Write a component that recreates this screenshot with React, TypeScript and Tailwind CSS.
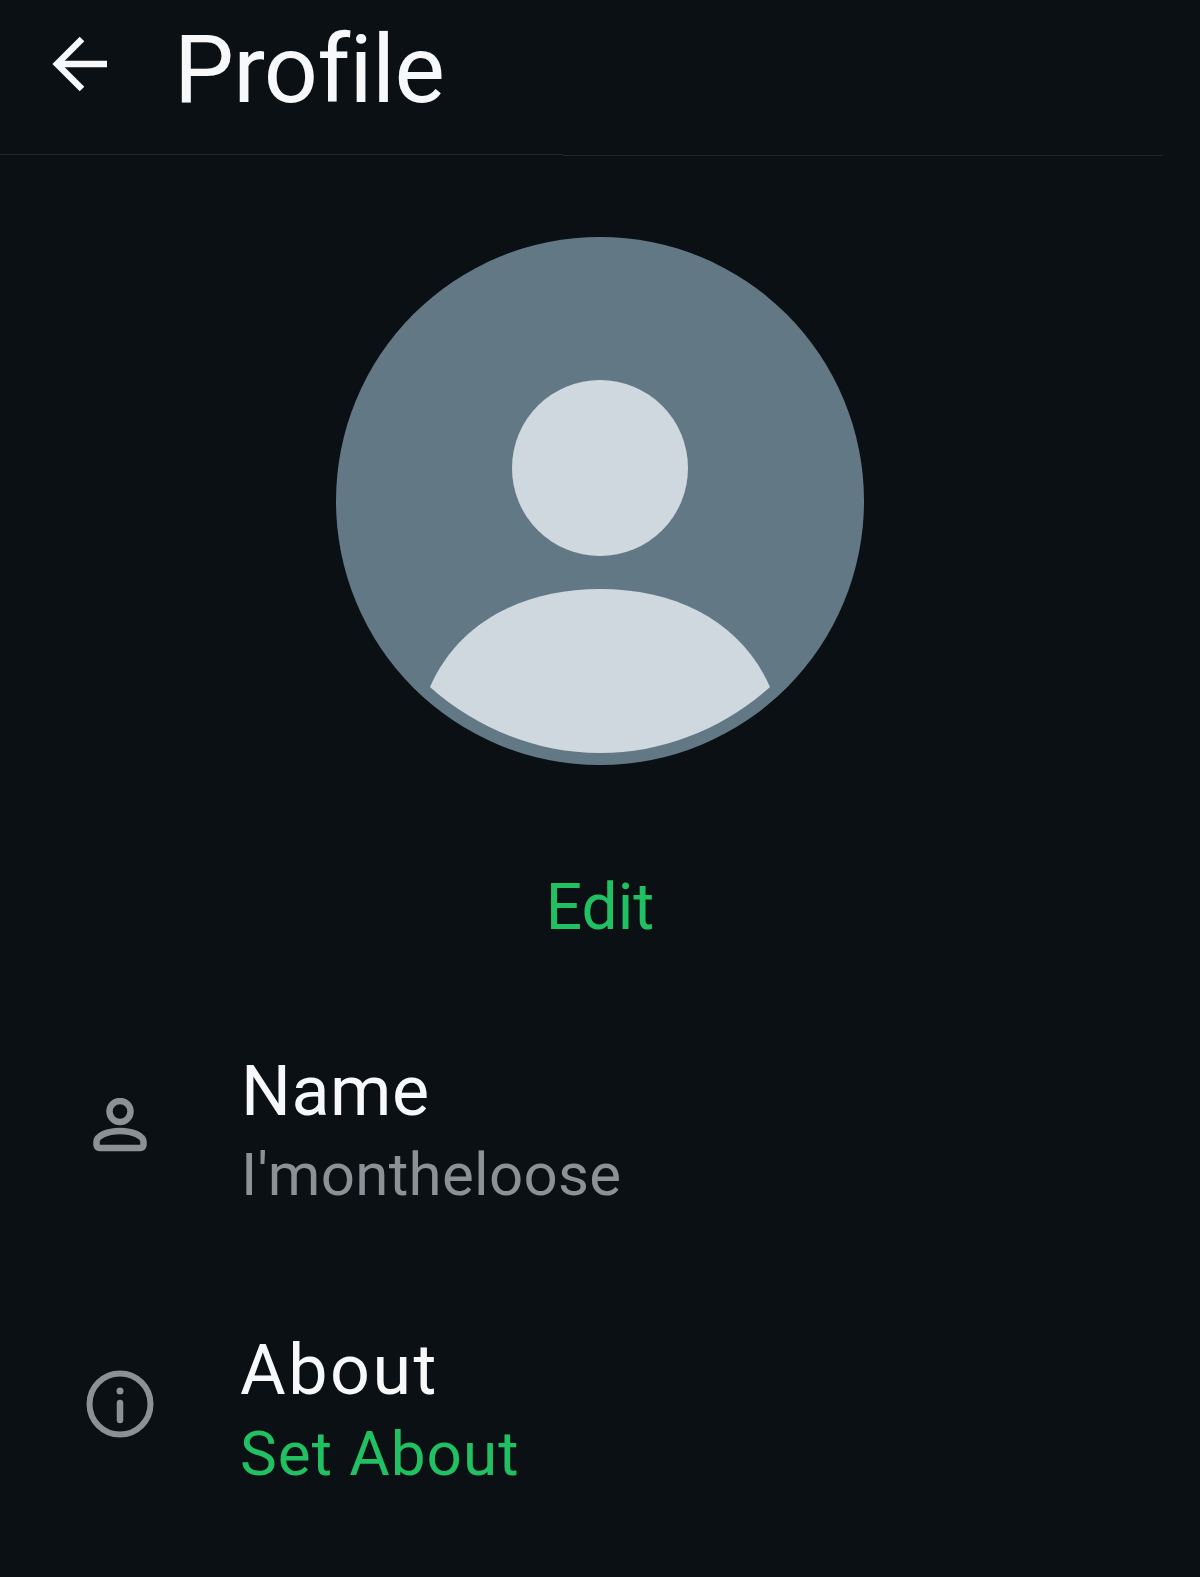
function BackArrow() {
  return (
    <svg width="56" height="56" viewBox="0 0 56 56" fill="none" stroke="#f7f8fa" strokeWidth="6.500" strokeLinecap="butt" strokeLinejoin="miter">
      <path d="M55 28H5" />
      <path d="M30 3 5 28l25 25" />
    </svg>
  );
}

function PersonIcon() {
  return (
    <svg width="54" height="54" viewBox="0 0 54 54" fill="none" stroke="#8b9195" strokeWidth="6.500">
      <circle cx="27" cy="13.500" r="10.500" />
      <path d="M3.500 47v-3c0-6 10-11 23.500-11s23.500 5 23.500 11v3a3 3 0 0 1-3 3H6.500a3 3 0 0 1-3-3Z" />
    </svg>
  );
}

function InfoIcon() {
  return (
    <svg width="68" height="68" viewBox="0 0 68 68" fill="none" stroke="#8b9195" strokeWidth="6">
      <circle cx="34" cy="34" r="30.500" />
      <circle cx="34" cy="21" r="3.500" fill="#8b9195" stroke="none" />
      <path d="M34 33v17" strokeWidth="6.500" strokeLinecap="round" />
    </svg>
  );
}

function Avatar() {
  return (
    <svg width="528" height="528" viewBox="0 0 528 528">
      <circle cx="264" cy="264" r="264" fill="#637885" />
      <circle cx="264" cy="231" r="88" fill="#cfd8df" />
      <path d="M94 450C122 386 186 352 264 352s142 34 170 98C388 491 328 516 264 516S140 491 94 450Z" fill="#cfd8df" />
    </svg>
  );
}

function Row({ icon, label, value, labelClass, valueClass }: { icon: React.ReactNode; label: string; value: string; labelClass: string; valueClass: string }) {
  return (
    <div className="flex items-center h-[172px]">
      <div className="w-[241px] flex justify-center pr-px shrink-0">
        <div className="w-[68px] flex justify-center">{icon}</div>
      </div>
      <div className="flex flex-col pt-[16px]">
        <span className={`text-[70px] leading-[84px] text-[#f7f8fa] ${labelClass}`}>{label}</span>
        <span className={`leading-[84px] ${valueClass}`}>{value}</span>
      </div>
    </div>
  );
}

function App() {
  return (
    <div className="w-[1200px] h-[1577px] bg-[#0b1014] overflow-hidden font-['Roboto',sans-serif]">
      <header className="flex items-center h-[154px] pl-[52px]">
        <div className="-mt-[26px]">
          <BackArrow />
        </div>
        <h1 className="ml-[66px] text-[95px] leading-none text-[#f7f8fa] -tracking-[0.7px] -mt-[16px]">Profile</h1>
      </header>
      <div className="flex h-[2px] w-[1163px]">
        <div className="w-[563px] h-px bg-[#24292d]" />
        <div className="flex-1 h-px mt-px bg-[#24292d]" />
      </div>

      <div className="flex flex-col items-center pt-[81px]">
        <Avatar />
        <span className="mt-[108px] text-[64px] leading-[70px] text-[#21c063]">Edit</span>
      </div>

      <div className="flex flex-col pt-[96px] gap-[107px]">
        <Row icon={<PersonIcon />} label="Name" value="I'montheloose" labelClass="tracking-[0.5px]" valueClass="text-[60px] tracking-[0.3px] text-[#8b9195]" />
        <Row icon={<InfoIcon />} label="About" value="Set About" labelClass="-ml-px tracking-[2.5px]" valueClass="-ml-px text-[62px] tracking-[1px] text-[#21c063]" />
      </div>
    </div>
  );
}

export default App;
